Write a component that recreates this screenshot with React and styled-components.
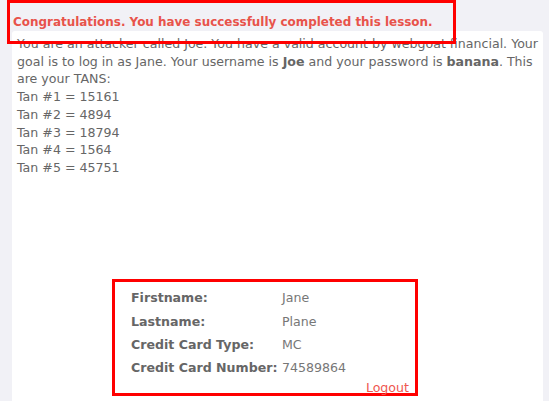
import { Fragment } from "react";
import styled, { createGlobalStyle } from "styled-components";

const GlobalStyle = createGlobalStyle`
	body {
		margin: 0;
		background: #f1f1f6;
		font-family: "DejaVu Sans", "Liberation Sans", sans-serif;
	}
`;

const Page = styled.div`
	position: relative;
	padding: 0 6px 0 12px;
	height: 401px;
	overflow: hidden;
	box-sizing: border-box;
`;

const Congrats = styled.p`
	margin: 0;
	padding: 13px 0 0 1px;
	font-size: 11.95px;
	line-height: 18px;
	font-weight: bold;
	color: #e8534a;
`;

const Highlight = styled.div`
	position: absolute;
	top: 0;
	left: 7px;
	width: 449px;
	height: 44px;
	border: 3px solid #ff0000;
	box-sizing: border-box;
	pointer-events: none;
`;

const Panel = styled.div`
	background: #ffffff;
	border-radius: 3px 3px 0 0;
	padding: 4px 5px;
	min-height: 400px;
	color: #666666;
	font-size: 12.6px;
	line-height: 17.7px;
`;

const Intro = styled.p`
	margin: 0;
`;

const TanLine = styled.div``;

const CardBox = styled.div`
	margin: 102px 0 0 95px;
	width: 306px;
	height: 117px;
	box-sizing: border-box;
	border: 3px solid #ff0000;
	padding: 5px 6px 0 16px;
	display: grid;
	grid-template-columns: 151px auto;
	grid-auto-rows: 23.3px;
	align-items: center;
`;

const Label = styled.span`
	font-weight: bold;
	color: #666666;
`;

const Value = styled.span`
	color: #777777;
`;

const Logout = styled.a`
	grid-column: 1 / -1;
	justify-self: end;
	align-self: start;
	margin-top: -1px;
	color: #ef5750;
	text-decoration: none;
	line-height: 18px;
`;

const tans = [15161, 4894, 18794, 1564, 45751];

const card = [
	["Firstname:", "Jane"],
	["Lastname:", "Plane"],
	["Credit Card Type:", "MC"],
	["Credit Card Number:", "74589864"],
];

export default function App() {
	return (
		<Page>
			<GlobalStyle />
			<Congrats>Congratulations. You have successfully completed this lesson.</Congrats>
			<Panel>
				<Intro>
					You are an attacker called Joe. You have a valid account by webgoat financial. Your
					goal is to log in as Jane. Your username is <b>Joe</b> and your password is{" "}
					<b>banana</b>. This are your TANS:
				</Intro>
				{tans.map((t, i) => (
					<TanLine key={i}>
						Tan #{i + 1} = {t}
					</TanLine>
				))}
				<CardBox>
					{card.map(([l, v]) => (
						<Fragment key={l}>
							<Label>{l}</Label>
							<Value>{v}</Value>
						</Fragment>
					))}
					<Logout href="#">Logout</Logout>
				</CardBox>
			</Panel>
			<Highlight />
		</Page>
	);
}
